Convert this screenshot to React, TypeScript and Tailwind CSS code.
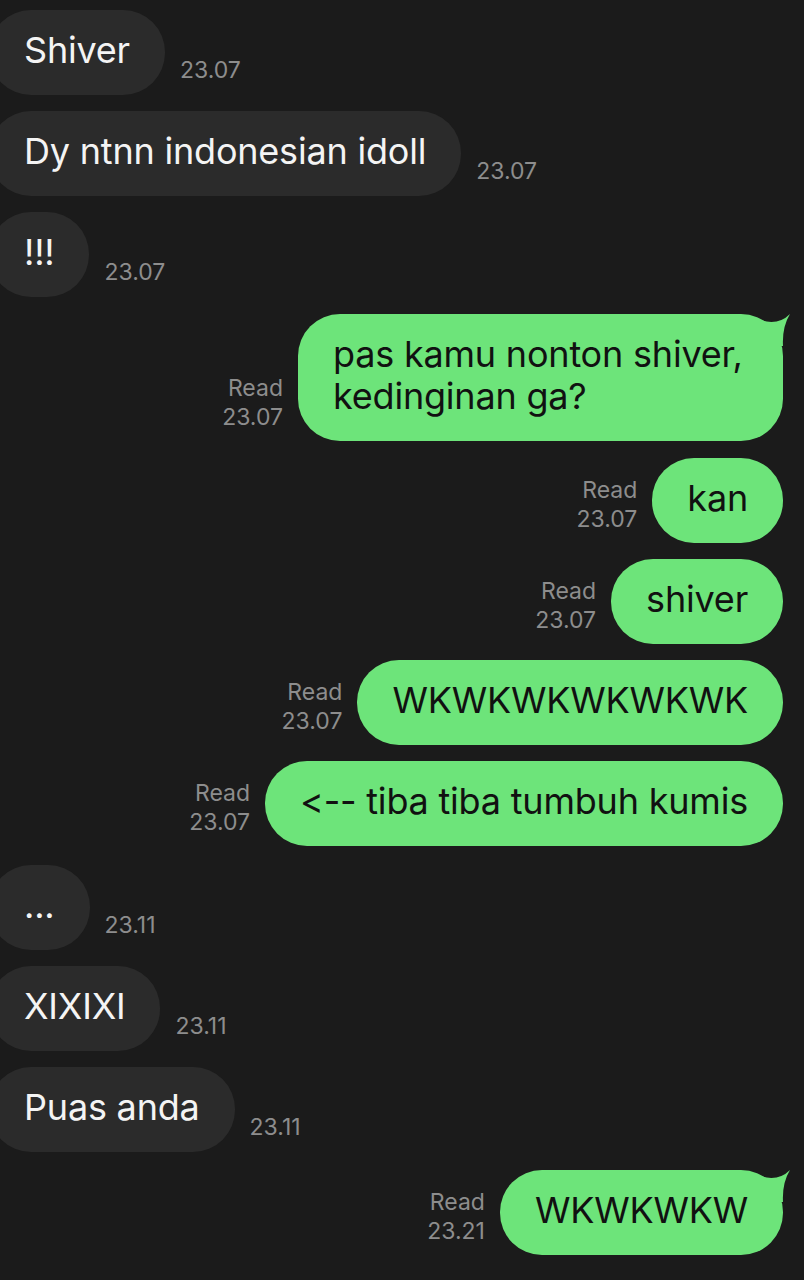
import React from "react";

type Msg = {
  id: number;
  mine: boolean;
  lines: string[];
  time: string;
  mt: string;
  tail?: boolean;
  width?: string;
};

const messages: Msg[] = [
  {id: 1, mine: false, lines: ["Shiver"], time: "23.07", mt: "mt-[10px]"},
  {id: 2, mine: false, lines: ["Dy ntnn indonesian idoll"], time: "23.07", mt: "mt-[16px]"},
  {id: 3, mine: false, lines: ["!!!"], time: "23.07", mt: "mt-[16px]"},
  {id: 4, mine: true, lines: ["pas kamu nonton shiver,", "kedinginan ga?"], time: "23.07", mt: "mt-[17px]", tail: true, width: "w-[485px]"},
  {id: 5, mine: true, lines: ["kan"], time: "23.07", mt: "mt-[17px]"},
  {id: 6, mine: true, lines: ["shiver"], time: "23.07", mt: "mt-[16px]"},
  {id: 7, mine: true, lines: ["WKWKWKWKWKWK"], time: "23.07", mt: "mt-[16px]"},
  {id: 8, mine: true, lines: ["<-- tiba tiba tumbuh kumis"], time: "23.07", mt: "mt-[16px]"},
  {id: 9, mine: false, lines: ["..."], time: "23.11", mt: "mt-[19px]"},
  {id: 10, mine: false, lines: ["XIXIXI"], time: "23.11", mt: "mt-[16px]"},
  {id: 11, mine: false, lines: ["Puas anda"], time: "23.11", mt: "mt-[16px]"},
  {id: 12, mine: true, lines: ["WKWKWKW"], time: "23.21", mt: "mt-[18px]", tail: true},
];

function Tail() {
  return (
    <svg
      className="absolute right-[-8px] top-[-2px]"
      width="31"
      height="34"
      viewBox="0 0 31 34"
    >
      <path d="M0 8 Q18 14 30 2 Q22 15 23 34 L0 34 Z" fill="#6de47a"/>
    </svg>
  );
}

function Bubble({msg}: {msg: Msg}) {
  const text = msg.lines.map((line, i) => (
    <React.Fragment key={i}>
      {i > 0 && <br/>}
      {line}
    </React.Fragment>
  ));

  if (msg.mine) {
    return (
      <div className={`${msg.mt} flex items-end justify-end gap-[15px] pr-[21px]`}>
        <div className="mb-[9px] text-right text-[23px] leading-[29px] text-[#8d8d8d]">
          <div>Read</div>
          <div>{msg.time}</div>
        </div>
        <div className={`${msg.width ?? ""} relative rounded-[42px] bg-[#6de47a] px-[35px] pt-[19px] pb-[24px] text-[36px] leading-[42px] tracking-[-0.2px] text-[#111111] whitespace-nowrap`}>
          {msg.tail && <Tail/>}
          <span className="relative">{text}</span>
        </div>
      </div>
    );
  }

  return (
    <div className={`${msg.mt} -ml-[11px] flex items-end gap-[15px]`}>
      <div className="rounded-[42px] bg-[#2b2b2b] px-[35px] pt-[19px] pb-[24px] text-[36px] leading-[42px] tracking-[-0.2px] text-[#f4f4f4] whitespace-nowrap">
        {text}
      </div>
      <div className="mb-[10px] text-[23px] leading-[29px] text-[#8d8d8d]">{msg.time}</div>
    </div>
  );
}

export default function App() {
  return (
    <div
      className="h-[1280px] w-[804px] overflow-hidden bg-[#1b1b1b] [font-feature-settings:'calt'_0,'liga'_0]"
      style={{fontFamily: "Inter, 'Noto Sans', sans-serif"}}
    >
      {messages.map(msg => (
        <Bubble key={msg.id} msg={msg}/>
      ))}
    </div>
  );
}
